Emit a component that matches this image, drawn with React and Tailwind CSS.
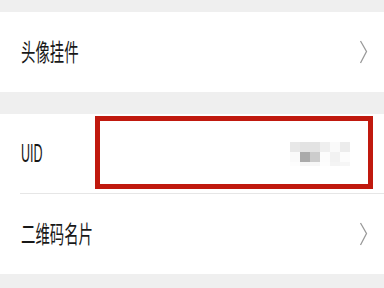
import React from "react";

const font = { fontFamily: '"Noto Sans CJK SC", "Liberation Sans", sans-serif' };

function Chevron() {
  return (
    <svg width="9" height="24" viewBox="0 0 9 24" className="shrink-0">
      <path d="M1.5 1 L7.5 11.5 L1.5 23" fill="none" stroke="#9a9a9a" strokeWidth="1.3" />
    </svg>
  );
}

function Label({ children, latin }) {
  return (
    <span
      className={`inline-block origin-left leading-none text-[#181818] ${latin ? "text-[25px] scale-x-[0.5]" : "text-[24px] scale-x-[0.6]"}`}
      style={latin ? { fontFamily: '"Liberation Sans", sans-serif' } : font}
    >
      {children}
    </span>
  );
}

function Mosaic() {
  const rows = [
    ["#e8e8e8", "#e3e3e3", "#e3e3e3", "#efefef", "#fafafa", "#ececec"],
    ["#fafafa", "#aaaaaa", "#cccccc", "#fcfcfc", "#f2f2f2", "#fcfcfc"],
  ];
  return (
    <div className="flex flex-col">
      {rows.map((r, i) => (
        <div key={i} className="flex">
          {r.map((c, j) => (
            <div key={j} className="w-[10px] h-[10px]" style={{ background: c }} />
          ))}
        </div>
      ))}
      <div className="flex">
        {["#fdfdfd", "#f6f6f6", "#f7f7f7", "#fdfdfd", "#f4f4f4", "#f6f6f6"].map((c, j) => (
          <div key={j} className="w-[10px] h-[4px]" style={{ background: c }} />
        ))}
      </div>
    </div>
  );
}

export default function App() {
  return (
    <div className="relative w-[384px] h-[288px] overflow-hidden bg-[#efefef]" style={font}>
      <div className="h-[12px]" />
      <div className="bg-white h-[80px] flex items-center pl-[21px] pr-[16px]">
        <div className="flex-1"><Label>头像挂件</Label></div>
        <Chevron />
      </div>
      <div className="h-[22px]" />
      <div className="bg-white">
        <div className="ml-[20px] h-[80px] flex items-center pl-[1px] pr-[34px] border-b border-[#e6e6e6]">
          <div className="flex-1"><Label latin>UID</Label></div>
          <div className="mt-[1px]"><Mosaic /></div>
        </div>
        <div className="h-[80px] flex items-center pl-[21px] pr-[16px]">
          <div className="flex-1"><Label>二维码名片</Label></div>
          <Chevron />
        </div>
      </div>
      <div className="absolute left-[95px] top-[116px] w-[278px] h-[73px] border-[5px] border-[#c0190e]" />
    </div>
  );
}
